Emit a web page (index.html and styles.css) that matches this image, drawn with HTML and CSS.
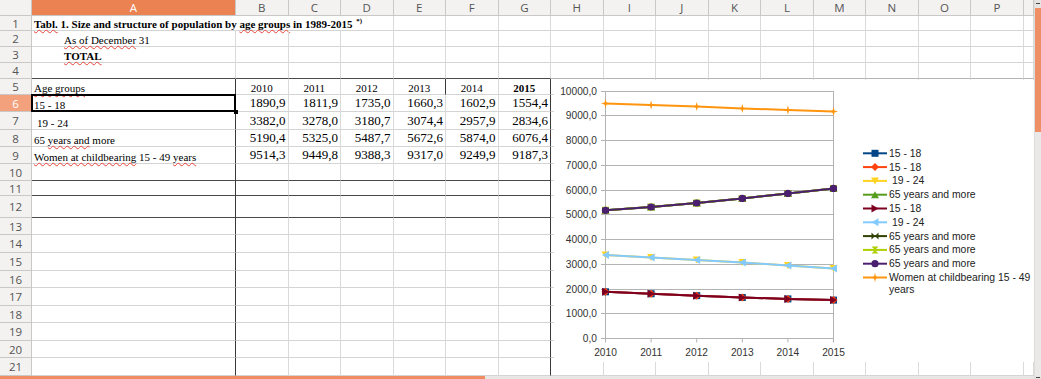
FILE: index.html
```html
<!DOCTYPE html>
<html lang="en">
<head>
    <meta charset="UTF-8">
    <title>population.ods</title>
    <link rel="stylesheet" href="styles.css">
</head>
<body>
<div class="app">
    <div class="main">
        <div class="sheet">
            <!-- column headers -->
            <div class="corner"></div><div class="ch on">A</div><div class="ch">B</div><div class="ch">C</div><div class="ch">D</div><div class="ch">E</div><div class="ch">F</div><div class="ch">G</div><div class="ch">H</div><div class="ch">I</div><div class="ch">J</div><div class="ch">K</div><div class="ch">L</div><div class="ch">M</div><div class="ch">N</div><div class="ch">O</div><div class="ch">P</div><div class="ch"></div>

            <div class="rh">1</div><div class="title"><span><span class="sp">Tabl.</span> 1. Size and structure of population by <span class="sp">age groups</span> in 1989-2015 <sup>*)</sup></span></div><div></div><div></div><div></div><div></div><div></div><div></div><div></div><div></div><div></div><div></div><div></div><div></div><div></div>
            <div class="rh">2</div><div class="ind"><span><span class="sp">As of December</span> 31</span></div><div></div><div></div><div></div><div></div><div></div><div></div><div></div><div></div><div></div><div></div><div></div><div></div><div></div><div></div><div></div><div></div>
            <div class="rh">3</div><div class="ind bold"><span class="sp">TOTAL</span></div><div></div><div></div><div></div><div></div><div></div><div></div><div></div><div></div><div></div><div></div><div></div><div></div><div></div><div></div><div></div><div></div>
            <div class="rh">4</div><div class="db"></div><div class="db"></div><div class="db"></div><div class="db"></div><div class="db"></div><div class="db"></div><div class="db"></div><div class="mb"></div><div class="mb"></div><div class="mb"></div><div class="mb"></div><div class="mb"></div><div class="mb"></div><div class="mb"></div><div class="mb"></div><div class="mb"></div><div class="mb"></div>
            <div class="rh">5</div><div class="dr"><span class="sp">Age groups</span></div><div class="yr">2010</div><div class="yr">2011</div><div class="yr">2012</div><div class="yr dr">2013</div><div class="yr">2014</div><div class="yr dr bold">2015</div><div></div><div></div><div></div><div></div><div></div><div></div><div></div><div></div><div></div><div></div>
            <div class="rh on">6</div><div class="dr cur">15 - 18</div><div class="num">1890,9</div><div class="num">1811,9</div><div class="num">1735,0</div><div class="num">1660,3</div><div class="num">1602,9</div><div class="num dr">1554,4</div><div></div><div></div><div></div><div></div><div></div><div></div><div></div><div></div><div></div><div></div>
            <div class="rh">7</div><div class="dr ind1">19 - 24</div><div class="num">3382,0</div><div class="num">3278,0</div><div class="num">3180,7</div><div class="num">3074,4</div><div class="num">2957,9</div><div class="num dr">2834,6</div><div></div><div></div><div></div><div></div><div></div><div></div><div></div><div></div><div></div><div></div>
            <div class="rh">8</div><div class="dr"><span>65 <span class="sp">years and</span> more</span></div><div class="num">5190,4</div><div class="num">5325,0</div><div class="num">5487,7</div><div class="num">5672,6</div><div class="num">5874,0</div><div class="num dr">6076,4</div><div></div><div></div><div></div><div></div><div></div><div></div><div></div><div></div><div></div><div></div>
            <div class="rh">9</div><div class="dr"><span><span class="sp">Women at childbearing</span> 15 - 49 <span class="sp">years</span></span></div><div class="num">9514,3</div><div class="num">9449,8</div><div class="num">9388,3</div><div class="num">9317,0</div><div class="num">9249,9</div><div class="num dr">9187,3</div><div></div><div></div><div></div><div></div><div></div><div></div><div></div><div></div><div></div><div></div>
            <div class="rh">10</div><div class="dr db"></div><div class="db"></div><div class="db"></div><div class="db"></div><div class="db"></div><div class="db"></div><div class="dr db"></div><div></div><div></div><div></div><div></div><div></div><div></div><div></div><div></div><div></div><div></div>
            <div class="rh">11</div><div class="dr db"></div><div class="db"></div><div class="db"></div><div class="db"></div><div class="db"></div><div class="db"></div><div class="dr db"></div><div></div><div></div><div></div><div></div><div></div><div></div><div></div><div></div><div></div><div></div>
            <div class="rh">12</div><div class="dr db"></div><div class="db"></div><div class="db"></div><div class="db"></div><div class="db"></div><div class="db"></div><div class="dr db"></div><div></div><div></div><div></div><div></div><div></div><div></div><div></div><div></div><div></div><div></div>
            <div class="rh">13</div><div class="dr"></div><div></div><div></div><div></div><div></div><div></div><div class="dr"></div><div></div><div></div><div></div><div></div><div></div><div></div><div></div><div></div><div></div><div></div>
            <div class="rh">14</div><div class="dr"></div><div></div><div></div><div></div><div></div><div></div><div class="dr"></div><div></div><div></div><div></div><div></div><div></div><div></div><div></div><div></div><div></div><div></div>
            <div class="rh">15</div><div class="dr"></div><div></div><div></div><div></div><div></div><div></div><div class="dr"></div><div></div><div></div><div></div><div></div><div></div><div></div><div></div><div></div><div></div><div></div>
            <div class="rh">16</div><div class="dr"></div><div></div><div></div><div></div><div></div><div></div><div class="dr"></div><div></div><div></div><div></div><div></div><div></div><div></div><div></div><div></div><div></div><div></div>
            <div class="rh">17</div><div class="dr"></div><div></div><div></div><div></div><div></div><div></div><div class="dr"></div><div></div><div></div><div></div><div></div><div></div><div></div><div></div><div></div><div></div><div></div>
            <div class="rh">18</div><div class="dr"></div><div></div><div></div><div></div><div></div><div></div><div class="dr"></div><div></div><div></div><div></div><div></div><div></div><div></div><div></div><div></div><div></div><div></div>
            <div class="rh">19</div><div class="dr"></div><div></div><div></div><div></div><div></div><div></div><div class="dr"></div><div></div><div></div><div></div><div></div><div></div><div></div><div></div><div></div><div></div><div></div>
            <div class="rh">20</div><div class="dr"></div><div></div><div></div><div></div><div></div><div></div><div class="dr"></div><div></div><div></div><div></div><div></div><div></div><div></div><div></div><div></div><div></div><div></div>
            <div class="rh">21</div><div class="dr"></div><div></div><div></div><div></div><div></div><div></div><div class="dr"></div><div></div><div></div><div></div><div></div><div></div><div></div><div></div><div></div><div></div><div></div>

            <!-- embedded chart object -->
            <svg class="chart" viewBox="0 0 480 282" width="480" height="282">
                <defs>
                    <marker id="k1" markerUnits="userSpaceOnUse" markerWidth="12" markerHeight="12" viewBox="-6 -6 12 12"><rect x="-3.5" y="-3.5" width="7" height="7" fill="#004586"/></marker>
                    <marker id="k2" markerUnits="userSpaceOnUse" markerWidth="12" markerHeight="12" viewBox="-6 -6 12 12"><polygon points="0,-4 4,0 0,4 -4,0" fill="#ff420e"/></marker>
                    <marker id="k3" markerUnits="userSpaceOnUse" markerWidth="12" markerHeight="12" viewBox="-6 -6 12 12"><polygon points="-4,-3.5 4,-3.5 0,3.5" fill="#ffd320"/></marker>
                    <marker id="k4" markerUnits="userSpaceOnUse" markerWidth="12" markerHeight="12" viewBox="-6 -6 12 12"><polygon points="-4,3.5 4,3.5 0,-3.5" fill="#579d1c"/></marker>
                    <marker id="k5" markerUnits="userSpaceOnUse" markerWidth="12" markerHeight="12" viewBox="-6 -6 12 12"><polygon points="-3.5,-4 3.5,0 -3.5,4" fill="#7e0021"/></marker>
                    <marker id="k6" markerUnits="userSpaceOnUse" markerWidth="12" markerHeight="12" viewBox="-6 -6 12 12"><polygon points="3.5,-4 -3.5,0 3.5,4" fill="#83caff"/></marker>
                    <marker id="k7" markerUnits="userSpaceOnUse" markerWidth="12" markerHeight="12" viewBox="-6 -6 12 12"><polygon points="-3.5,-3.5 0,0 3.5,-3.5 3.5,3.5 0,0 -3.5,3.5" fill="#314004"/></marker>
                    <marker id="k8" markerUnits="userSpaceOnUse" markerWidth="12" markerHeight="12" viewBox="-6 -6 12 12"><polygon points="-3.5,-3.5 3.5,-3.5 0,0 3.5,3.5 -3.5,3.5 0,0" fill="#aecf00"/></marker>
                    <marker id="k9" markerUnits="userSpaceOnUse" markerWidth="12" markerHeight="12" viewBox="-6 -6 12 12"><circle r="3.6" fill="#4b1f6f"/></marker>
                    <marker id="k10" markerUnits="userSpaceOnUse" markerWidth="12" markerHeight="12" viewBox="-6 -6 12 12"><polygon points="0,-4.5 1,-1 4.5,0 1,1 0,4.5 -1,1 -4.5,0 -1,-1" fill="#ff950e"/></marker>
                </defs>

                <g class="grid">
                    <path d="M47 11.5H279.5M47 35.5H279.5M47 60.5H279.5M47 85.5H279.5M47 110.5H279.5M47 134.5H279.5M47 159.5H279.5M47 184.5H279.5M47 209.5H279.5M47 233.5H279.5M47 258.5H279.5"/>
                    <path d="M51.5 11V262.5M279.5 11V262.5M97.1 258.5V262.5M142.7 258.5V262.5M188.3 258.5V262.5M233.9 258.5V262.5"/>
                </g>

                <g class="ylab">
                    <text x="43" y="15">10000,0</text>
                    <text x="43" y="39">9000,0</text>
                    <text x="43" y="64">8000,0</text>
                    <text x="43" y="89">7000,0</text>
                    <text x="43" y="114">6000,0</text>
                    <text x="43" y="138">5000,0</text>
                    <text x="43" y="163">4000,0</text>
                    <text x="43" y="188">3000,0</text>
                    <text x="43" y="213">2000,0</text>
                    <text x="43" y="237">1000,0</text>
                    <text x="43" y="262">0,0</text>
                </g>
                <g class="xlab">
                    <text x="51.5" y="275.5">2010</text>
                    <text x="97.1" y="275.5">2011</text>
                    <text x="142.7" y="275.5">2012</text>
                    <text x="188.3" y="275.5">2013</text>
                    <text x="233.9" y="275.5">2014</text>
                    <text x="279.5" y="275.5">2015</text>
                </g>

                <!-- series -->
                <polyline class="s1" points="51.5,211.8 97.1,213.75 142.7,215.65 188.3,217.5 233.9,218.9 279.5,220.1"/>
                <polyline class="s2" points="51.5,211.8 97.1,213.75 142.7,215.65 188.3,217.5 233.9,218.9 279.5,220.1"/>
                <polyline class="s3" points="51.5,175 97.1,177.5 142.7,179.9 188.3,182.6 233.9,185.4 279.5,188.5"/>
                <polyline class="s4" points="51.5,130.3 97.1,127 142.7,123 188.3,118.4 233.9,113.4 279.5,108.4"/>
                <polyline class="s5" points="51.5,211.8 97.1,213.75 142.7,215.65 188.3,217.5 233.9,218.9 279.5,220.1"/>
                <polyline class="s6" points="51.5,175 97.1,177.5 142.7,179.9 188.3,182.6 233.9,185.4 279.5,188.5"/>
                <polyline class="s7" points="51.5,130.3 97.1,127 142.7,123 188.3,118.4 233.9,113.4 279.5,108.4"/>
                <polyline class="s8" points="51.5,130.3 97.1,127 142.7,123 188.3,118.4 233.9,113.4 279.5,108.4"/>
                <polyline class="s9" points="51.5,130.3 97.1,127 142.7,123 188.3,118.4 233.9,113.4 279.5,108.4"/>
                <polyline class="s10" points="51.5,23.5 97.1,25.1 142.7,26.6 188.3,28.4 233.9,30 279.5,31.6"/>

                <!-- legend -->
                <g class="legend">
                    <polyline class="s1 lg" points="309,73.3 321,73.3 333,73.3"/><text x="335" y="76.8">15 - 18</text>
                    <polyline class="s2 lg" points="309,87.1 321,87.1 333,87.1"/><text x="335" y="90.6">15 - 18</text>
                    <polyline class="s3 lg" points="309,100.9 321,100.9 333,100.9"/><text x="335" y="104.4">&#160;19 - 24</text>
                    <polyline class="s4 lg" points="309,114.7 321,114.7 333,114.7"/><text x="335" y="118.2">65 years and more</text>
                    <polyline class="s5 lg" points="309,128.5 321,128.5 333,128.5"/><text x="335" y="132">15 - 18</text>
                    <polyline class="s6 lg" points="309,142.3 321,142.3 333,142.3"/><text x="335" y="145.8">&#160;19 - 24</text>
                    <polyline class="s7 lg" points="309,156.1 321,156.1 333,156.1"/><text x="335" y="159.6">65 years and more</text>
                    <polyline class="s8 lg" points="309,169.9 321,169.9 333,169.9"/><text x="335" y="173.4">65 years and more</text>
                    <polyline class="s9 lg" points="309,183.7 321,183.7 333,183.7"/><text x="335" y="187.2">65 years and more</text>
                    <polyline class="s10 lg" points="309,197.5 321,197.5 333,197.5"/><text x="335" y="201">Women at childbearing 15 - 49<tspan x="335" dy="11.6">years</tspan></text>
                </g>
            </svg>
        </div>
        <div class="hscroll"><div class="thumb"></div></div>
    </div>
    <div class="vscroll"><div class="btn"></div><div class="thumb"></div><div class="track"></div><div class="btn down"></div></div>
</div>
</body>
</html>
```

FILE: styles.css
```css
*{margin: 0;padding: 0;box-sizing: border-box;}
body{width: 1041px;height: 379px;overflow: hidden;background: #fff;font-family: "Liberation Serif", serif;}

.app{display: flex;height: 379px;}
.main{flex: 1;display: flex;flex-direction: column;min-width: 0;}

/* sheet grid */
.sheet{position: relative;height: 376px;display: grid;
    grid-template-columns: 32px 204px repeat(15, 52.53px) 1fr;
    grid-template-rows: 16px 15px 16px 16px 16px 16px 17px 18px 17px 17px 17px 15px 22px 17px 18px 18px 17px 18px 17px 18px 17px 18px;
}
.sheet > div{border-right: 1px solid #dadada;border-bottom: 1px solid #d4d4d4;display: flex;align-items: flex-end;
    padding: 0 2px;white-space: nowrap;font-size: 11px;line-height: 11px;color: #000;min-width: 0;}

.sheet > .corner,
.sheet > .ch,
.sheet > .rh{background: #f3f2f1;border-color: #c9c8c7;font-family: "Open Sans", sans-serif;font-size: 11.5px;line-height: 11px;
    color: #555;justify-content: center;align-items: center;padding: 0;}
.sheet > .on{background: #eb8252;color: #fff;}
.sheet > .rh.on{background: #f2a17c;}

.sheet > .title{grid-column: span 4;font-weight: bold;font-size: 11px;line-height: 11px;}
.title sup{font-size: 7px;vertical-align: 5px;line-height: 0;margin-left: 1px;}
.sheet > .ind{padding-left: 32px;}
.sheet > .ind1{padding-left: 5px;}
.bold{font-weight: bold;}
.sheet > .yr{justify-content: center;}
.sheet > .num{justify-content: flex-end;font-size: 13px;line-height: 13px;padding-bottom: 2px;}

.sheet > .dr{border-right-color: #3a3a3a;}
.sheet > .db{border-bottom-color: #4a4a4a;}
.sheet > .mb{border-bottom-color: #b4b4b4;}

.sp{text-decoration: underline wavy #e8453c;text-decoration-thickness: 1px;text-underline-offset: 1px;text-decoration-skip-ink: none;}

/* selected cell */
.sheet > .cur{position: relative;}
.cur::after{content: "";position: absolute;left: -1px;top: -1px;right: -1px;bottom: -1px;border: 2px solid #000;}
.cur::before{content: "";position: absolute;right: -3px;bottom: -3px;width: 4px;height: 4px;background: #000;}

/* chart object */
.chart{position: absolute;left: 554px;top: 80px;width: 480px;height: 282px;background: #fff;font-family: "Liberation Sans", sans-serif;font-size: 10px;}
.grid path{stroke: #b3b3b3;stroke-width: 1;fill: none;}
.ylab text{text-anchor: end;fill: #333;font-size: 10.2px;}
.xlab text{text-anchor: middle;fill: #333;font-size: 10.2px;}
.legend text{fill: #222;font-size: 10.4px;}
polyline{fill: none;stroke-width: 2;stroke-linejoin: round;}
.s1{stroke: #004586;marker: url(#k1);}
.s2{stroke: #ff420e;marker: url(#k2);}
.s3{stroke: #ffd320;marker: url(#k3);}
.s4{stroke: #579d1c;marker: url(#k4);}
.s5{stroke: #7e0021;marker: url(#k5);}
.s6{stroke: #83caff;marker: url(#k6);}
.s7{stroke: #314004;marker: url(#k7);}
.s8{stroke: #aecf00;marker: url(#k8);}
.s9{stroke: #4b1f6f;marker: url(#k9);}
.s10{stroke: #ff950e;marker: url(#k10);}
.lg{marker-start: none;marker-end: none;}

/* scrollbars */
.hscroll{height: 3px;background: #e9e7e5;display: flex;}
.hscroll .thumb{width: 485px;background: #ef8c62;}
.vscroll{width: 7px;display: flex;flex-direction: column;background: #ebe9e7;border-left: 1px solid #dedcda;}
.vscroll .btn{height: 8px;background: #e6e4e2;position: relative;}
.vscroll .btn::after{content: "";position: absolute;left: 1px;right: 1px;top: 3px;height: 1px;background: #444;}
.vscroll .btn.down{height: 3px;}
.vscroll .btn.down::after{top: 1px;}
.vscroll .thumb{height: 124px;background: #ef8f66;}
.vscroll .track{flex: 1;}
```
